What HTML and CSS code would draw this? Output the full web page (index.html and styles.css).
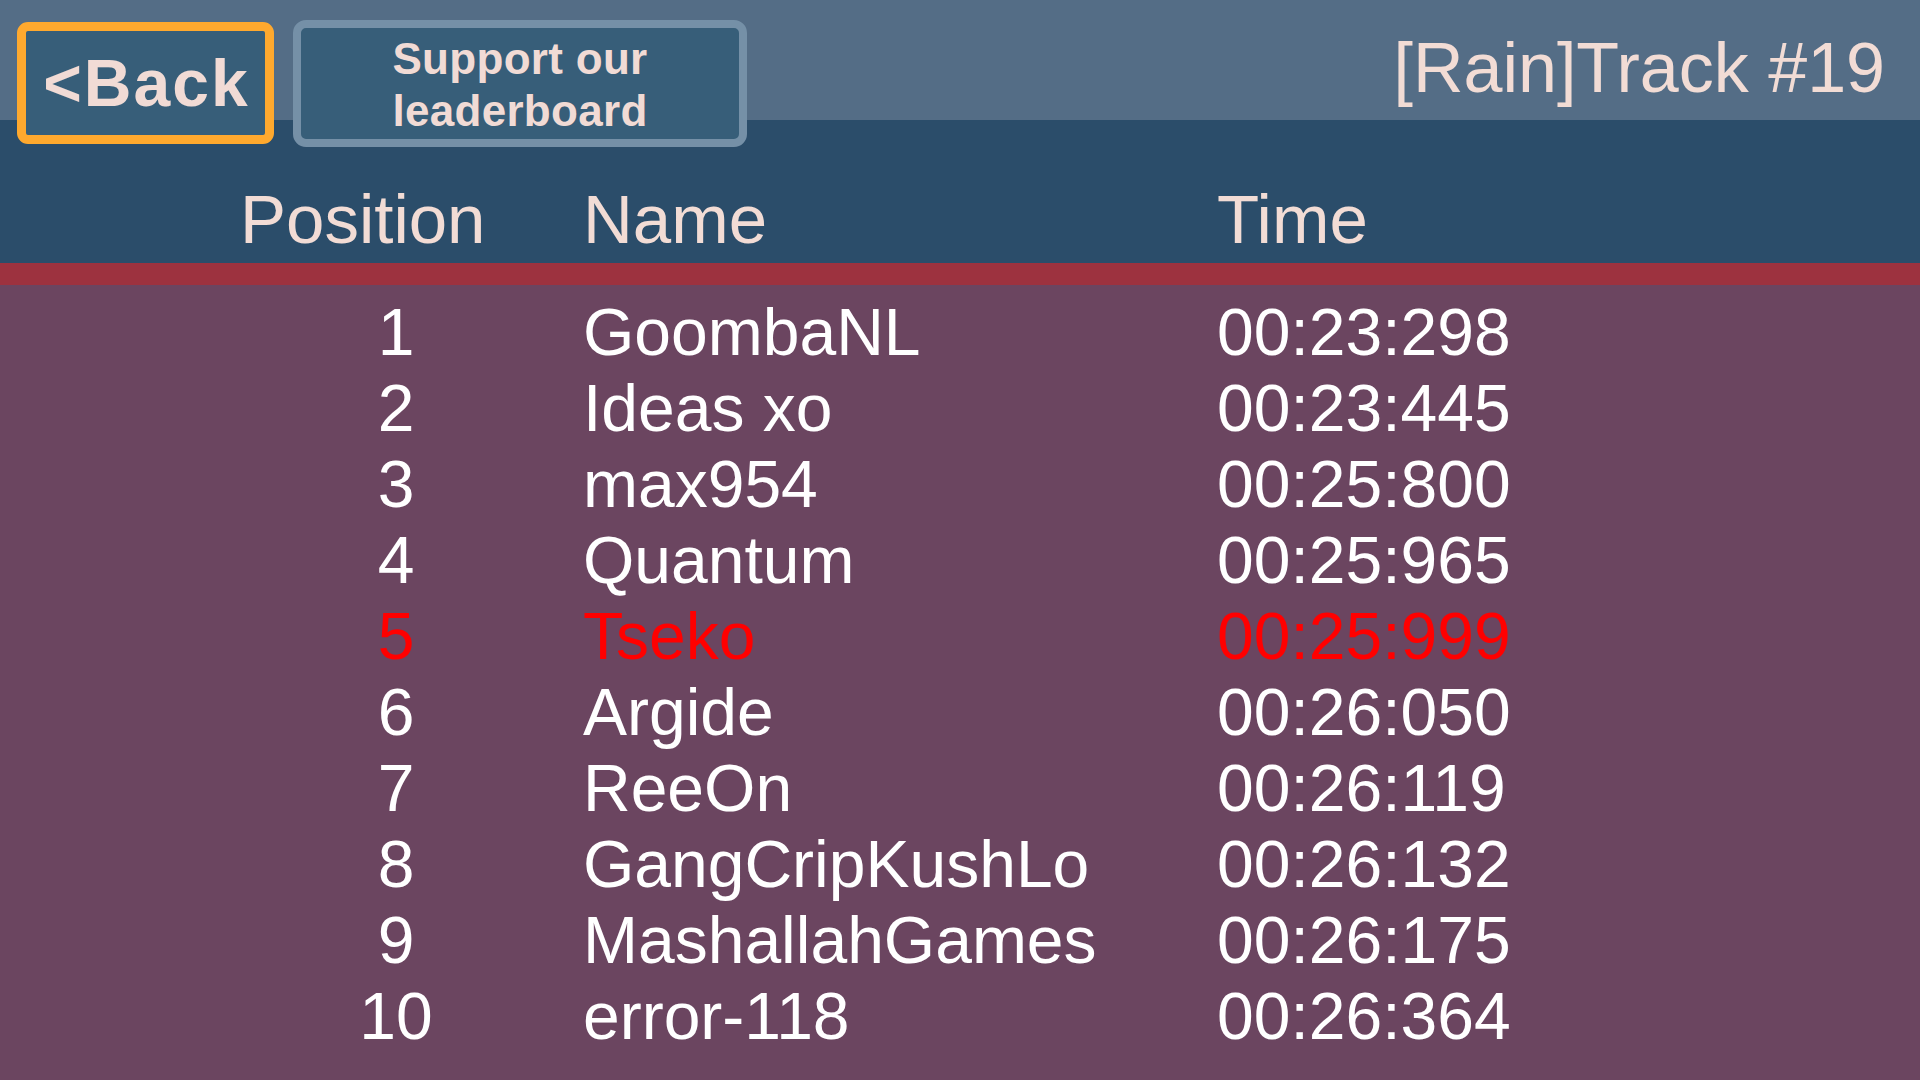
FILE: index.html
```html
<!DOCTYPE html>
<html lang="en">
<head>
<meta charset="utf-8">
<title>Leaderboard</title>
<link rel="stylesheet" href="styles.css">
</head>
<body>
<div class="screen">
  <div class="topbar">
    <button class="btn btn-back">&lt;Back</button>
    <button class="btn btn-support">Support our<br>leaderboard</button>
    <div class="title">[Rain]Track #19</div>
  </div>
  <div class="head">
    <div class="h-pos">Position</div>
    <div class="h-name">Name</div>
    <div class="h-time">Time</div>
  </div>
  <div class="stripe"></div>
  <div class="board">
    <div class="row"><span class="pos">1</span><span class="name">GoombaNL</span><span class="time">00:23:298</span></div>
    <div class="row"><span class="pos">2</span><span class="name">Ideas xo</span><span class="time">00:23:445</span></div>
    <div class="row"><span class="pos">3</span><span class="name">max954</span><span class="time">00:25:800</span></div>
    <div class="row"><span class="pos">4</span><span class="name">Quantum</span><span class="time">00:25:965</span></div>
    <div class="row me"><span class="pos">5</span><span class="name">Tseko</span><span class="time">00:25:999</span></div>
    <div class="row"><span class="pos">6</span><span class="name">Argide</span><span class="time">00:26:050</span></div>
    <div class="row"><span class="pos">7</span><span class="name">ReeOn</span><span class="time">00:26:119</span></div>
    <div class="row"><span class="pos">8</span><span class="name">GangCripKushLo</span><span class="time">00:26:132</span></div>
    <div class="row"><span class="pos">9</span><span class="name">MashallahGames</span><span class="time">00:26:175</span></div>
    <div class="row"><span class="pos">10</span><span class="name">error-118</span><span class="time">00:26:364</span></div>
  </div>
</div>
</body>
</html>
```
FILE: styles.css
```css
html, body {
  margin: 0;
  padding: 0;
  width: 1920px;
  height: 1080px;
  overflow: hidden;
  background: #6b4560;
  font-family: "Liberation Sans", Arial, sans-serif;
}

.screen {
  width: 1920px;
  height: 1080px;
  display: flex;
  flex-direction: column;
}

.topbar {
  position: relative;
  z-index: 1;
  height: 120px;
  flex: none;
  background: #546d86;
  display: flex;
  align-items: flex-start;
  padding-left: 17px;
  padding-right: 35px;
  box-sizing: border-box;
}

.btn {
  font-family: "Liberation Sans", Arial, sans-serif;
  font-weight: bold;
  color: #f1dbd5;
  background: #375e79;
  box-sizing: border-box;
  padding: 0;
  cursor: pointer;
  flex: none;
}

.btn-back {
  margin-top: 22px;
  width: 257px;
  height: 122px;
  border: 9px solid #ffa92e;
  border-radius: 11px;
  font-size: 66px;
  letter-spacing: 2px;
  text-indent: 2px;
  line-height: 1;
}

.btn-support {
  margin-top: 20px;
  margin-left: 19px;
  width: 454px;
  height: 127px;
  border: 8px solid #7590a7;
  border-radius: 13px;
  font-size: 44px;
  letter-spacing: 0.3px;
  line-height: 52px;
  padding-top: 2px;
}

.title {
  margin-left: auto;
  margin-top: 28px;
  font-size: 70px;
  line-height: 80px;
  color: #f2dcd5;
  white-space: nowrap;
}

.head {
  flex: none;
  height: 143px;
  box-sizing: border-box;
  padding-top: 60px;
  background: #2b4d6a;
  display: flex;
  color: #f2dcd5;
  font-size: 69px;
  line-height: 80px;
}

.h-pos {
  margin-left: 240px;
  width: 343px;
}

.h-name {
  width: 634px;
}

.stripe {
  flex: none;
  height: 22px;
  background: #9d323f;
}

.board {
  flex: 1;
  padding-top: 9px;
  background: #6b4560;
}

.row {
  display: grid;
  grid-template-columns: 200px 547px auto;
  column-gap: 87px;
  padding-left: 296px;
  font-size: 66px;
  line-height: 76px;
  color: #ffffff;
  white-space: nowrap;
}

.pos {
  text-align: center;
}

.row.me {
  color: #ff0000;
}
```
